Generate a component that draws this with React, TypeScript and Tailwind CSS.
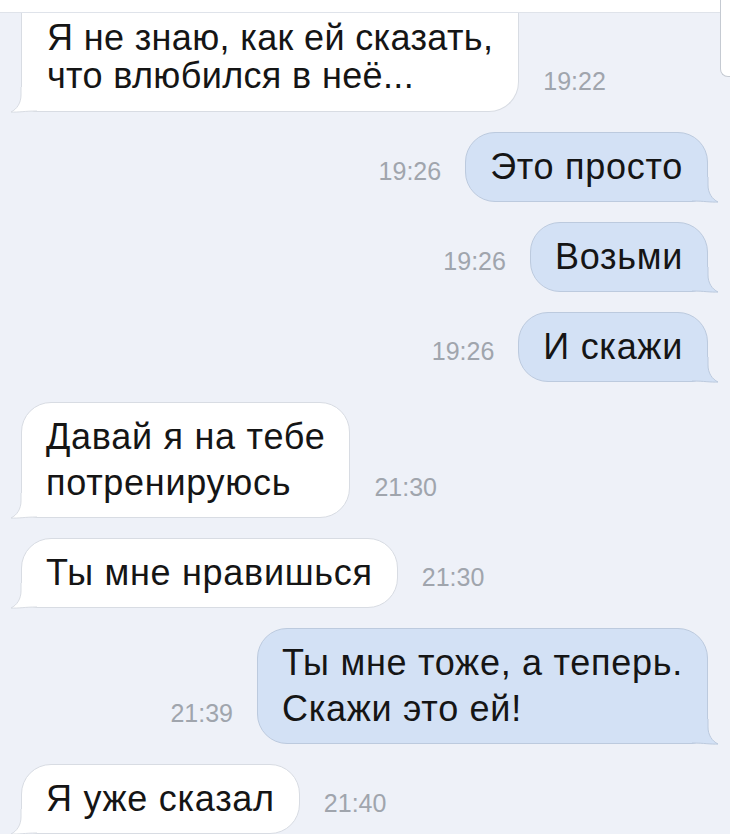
import React from 'react';

type Msg = {
  text: string[];
  time: string;
  out?: boolean;
};

const messages: Msg[] = [
  { text: ['Возьми'], time: '19:26', out: true },
  { text: ['И скажи'], time: '19:26', out: true },
  { text: ['Давай я на тебе', 'потренируюсь'], time: '21:30' },
  { text: ['Ты мне нравишься'], time: '21:30' },
  { text: ['Ты мне тоже, а теперь.', 'Скажи это ей!'], time: '21:39', out: true },
  { text: ['Я уже сказал'], time: '21:40' },
];

const Tail = ({ out }: { out?: boolean }) => (
  <svg
    width="26"
    height="26"
    viewBox="0 0 26 26"
    className={`absolute bottom-[-2px] ${out ? 'right-[-11px]' : 'left-[-11px] -scale-x-100'}`}
  >
    <path
      d="M0 0 H16 V8 C16 16 20 22 26 25 C19 25.5 12 24 0 24 Z"
      fill={out ? '#d3e1f5' : '#ffffff'}
    />
    <path
      d="M16 0 V8 C16 16 20 22 26 25 C19 25.5 12 24 0 24"
      fill="none"
      stroke={out ? '#bccade' : '#d8dce3'}
      strokeWidth="1"
    />
  </svg>
);

const Time = ({ value }: { value: string }) => (
  <span className="text-[25px] leading-[28px] mb-[17px] text-[#a0a5ad] shrink-0">
    {value}
  </span>
);

const Bubble = ({ msg }: { msg: Msg }) => (
  <div
    className={`relative rounded-[30px] border px-[24px] py-[11px] text-[36px] leading-[46px] tracking-[0.02em] text-[#151515] whitespace-nowrap ${
      msg.out
        ? 'bg-[#d3e1f5] border-[#bccade] rounded-br-[16px]'
        : 'bg-white border-[#d8dce3] rounded-bl-[16px]'
    }`}
  >
    {msg.text.map((line) => (
      <div key={line}>{line}</div>
    ))}
    <Tail out={msg.out} />
  </div>
);

const App = () => {
  return (
    <div className="relative w-[730px] h-[834px] overflow-hidden bg-[#eef1f8] font-['Liberation_Sans',Arial,sans-serif]">
      {/* top bar edge */}
      <div className="h-[13px] bg-white border-b border-[#dfe3ea]" />
      <div className="absolute right-0 top-0 w-[10px] h-[77px] bg-white border-l border-b border-[#c5cad2] rounded-bl-[8px]" />

      <div className="flex flex-col gap-5 pl-[21px] pr-[22px]">
        {/* first message, cut off by the header */}
        <div className="flex items-end gap-6">
          <div className="relative bg-white border border-t-0 border-[#d8dce3] rounded-b-[30px] rounded-bl-[16px] px-[25px] pt-[6px] pb-[16px] text-[36px] leading-[38px] tracking-[0.01em] text-[#151515] whitespace-nowrap">
            <div>Я не знаю, как ей сказать,</div>
            <div>что влюбился в неё...</div>
            <Tail />
          </div>
          <Time value="19:22" />
        </div>

        <div className="flex items-end justify-end gap-6">
          <Time value="19:26" />
          <Bubble msg={{ text: ['Это просто'], time: '19:26', out: true }} />
        </div>

        {messages.map((m, i) => (
          <div key={i} className={`flex items-end gap-6 ${m.out ? 'justify-end' : ''}`}>
            {m.out && <Time value={m.time} />}
            <Bubble msg={m} />
            {!m.out && <Time value={m.time} />}
          </div>
        ))}
      </div>
    </div>
  );
};

export default App;
